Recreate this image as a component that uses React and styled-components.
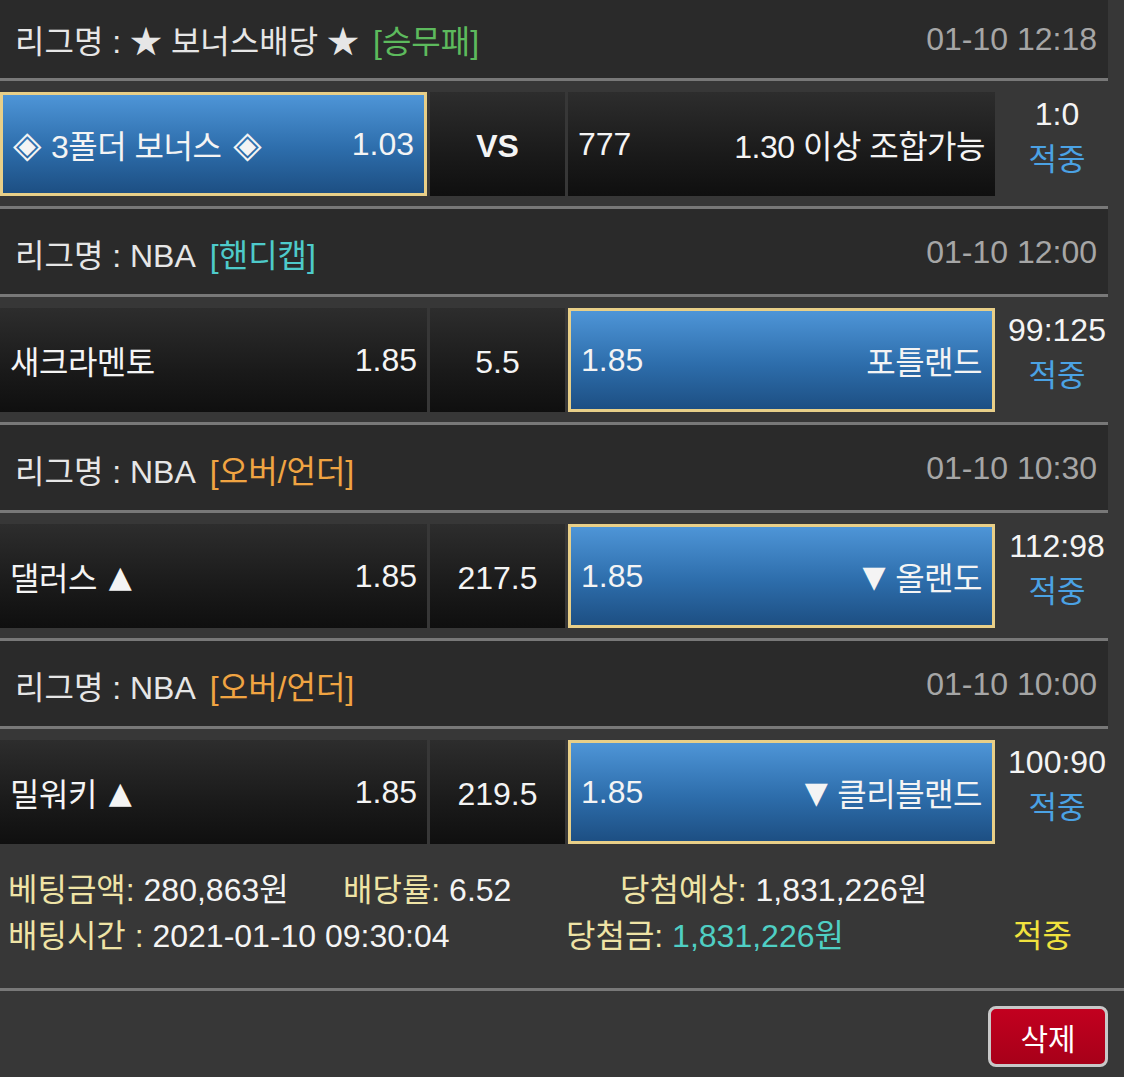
import styled, { createGlobalStyle } from "styled-components";

const GlobalStyle = createGlobalStyle`
    body {
        margin: 0;
        background-color: #373737;
        font-family: "Liberation Sans", "Noto Sans CJK KR", sans-serif;
        color: #f2f2f2;
    }
`;

const matches = [
    {
        league: "★ 보너스배당 ★",
        tag: "[승무패]",
        tagColor: "#5dba5d",
        date: "01-10 12:18",
        home: "3폴더 보너스",
        homeBefore: "◈",
        homeAfter: "◈",
        homeOdds: "1.03",
        mid: "VS",
        awayOdds: "777",
        away: "1.30 이상 조합가능",
        pick: "home",
        score: "1:0",
    },
    {
        league: "NBA",
        tag: "[핸디캡]",
        tagColor: "#4ecaca",
        date: "01-10 12:00",
        home: "새크라멘토",
        homeOdds: "1.85",
        mid: "5.5",
        awayOdds: "1.85",
        away: "포틀랜드",
        pick: "away",
        score: "99:125",
    },
    {
        league: "NBA",
        tag: "[오버/언더]",
        tagColor: "#f0a442",
        date: "01-10 10:30",
        home: "댈러스",
        homeAfter: "▲",
        homeOdds: "1.85",
        mid: "217.5",
        awayOdds: "1.85",
        away: "올랜도",
        awayBefore: "▼",
        pick: "away",
        score: "112:98",
    },
    {
        league: "NBA",
        tag: "[오버/언더]",
        tagColor: "#f0a442",
        date: "01-10 10:00",
        home: "밀워키",
        homeAfter: "▲",
        homeOdds: "1.85",
        mid: "219.5",
        awayOdds: "1.85",
        away: "클리블랜드",
        awayBefore: "▼",
        pick: "away",
        score: "100:90",
    },
];

const App = () => {
    return (
        <Page>
            <GlobalStyle />
            <Board>
                {matches.map((m, i) => (
                    <div key={i}>
                        <Header $first={i === 0}>
                            <League>
                                리그명 : {m.league}
                                <Tag $color={m.tagColor}>{m.tag}</Tag>
                            </League>
                            <DateText>{m.date}</DateText>
                        </Header>
                        <MatchRow $last={i === matches.length - 1}>
                            <Cell $picked={m.pick === "home"}>
                                <Name>
                                    {m.homeBefore && <Glyph $side="right" $big={m.homeBefore === "◈"}>{m.homeBefore}</Glyph>}
                                    {m.home}
                                    {m.homeAfter && <Glyph $side="left" $big={m.homeAfter === "◈"}>{m.homeAfter}</Glyph>}
                                </Name>
                                <span>{m.homeOdds}</span>
                            </Cell>
                            <MidCell $bold={m.mid === "VS"}>{m.mid}</MidCell>
                            <Cell $picked={m.pick === "away"}>
                                <span>{m.awayOdds}</span>
                                <Name>
                                    {m.awayBefore && <Glyph $side="right">{m.awayBefore}</Glyph>}
                                    {m.away}
                                </Name>
                            </Cell>
                            <Score>
                                <div>{m.score}</div>
                                <Hit>적중</Hit>
                            </Score>
                        </MatchRow>
                    </div>
                ))}
            </Board>

            <Summary>
                <SummaryLine $cols="335px 277px 1fr">
                    <span><Label>베팅금액:</Label> 280,863원</span>
                    <span><Label>배당률:</Label> 6.52</span>
                    <span><Label>당첨예상:</Label> 1,831,226원</span>
                </SummaryLine>
                <SummaryLine $cols="558px 447px 1fr">
                    <span><Label>배팅시간 :</Label> 2021-01-10 09:30:04</span>
                    <span><Label>당첨금:</Label> <Win>1,831,226원</Win></span>
                    <Result>적중</Result>
                </SummaryLine>
            </Summary>

            <Actions>
                <DeleteButton>삭제</DeleteButton>
            </Actions>
        </Page>
    );
};

export default App;

const Page = styled.div`
    width: 1124px;
    min-height: 1077px;
    background-color: #373737;
    font-size: 32px;
`;

const Board = styled.div`
    width: 1108px;
`;

const Header = styled.div`
    height: ${props => props.$first ? "78px" : "83px"};
    padding: ${props => props.$first ? "0" : "2px"} 11px 0 15px;
    display: flex;
    align-items: center;
    justify-content: space-between;
    background-color: #2a2a2a;
    border-bottom: 3px solid #787878;
`;

const League = styled.div`
    color: #e6e6e6;
    white-space: nowrap;
`;

const Tag = styled.span`
    margin-left: 14px;
    color: ${props => props.$color};
`;

const DateText = styled.div`
    color: #a6a6a6;
`;

const MatchRow = styled.div`
    display: grid;
    grid-template-columns: 427px 135px 427px 1fr;
    column-gap: 3px;
    height: 104px;
    padding: 11px 0 10px;
    border-bottom: ${props => props.$last ? "none" : "3px solid #787878"};
`;

const Cell = styled.div`
    display: flex;
    align-items: center;
    justify-content: space-between;
    padding: 0 10px;
    box-sizing: border-box;
    white-space: nowrap;
    color: #f4f4f4;
    border: ${props => props.$picked ? "3px solid #e8cf88" : "none"};
    background: ${props => props.$picked
        ? "linear-gradient(180deg, #4e95d7 0%, #2d6dab 55%, #1d4f83 100%)"
        : "linear-gradient(180deg, #2d2d2d 0%, #1a1a1a 60%, #0f0f0f 100%)"};
`;

const Name = styled.span`
    display: flex;
    align-items: center;
    letter-spacing: -0.5px;
`;

const Glyph = styled.span`
    font-family: "DejaVu Sans", sans-serif;
    font-size: ${props => props.$big ? "37px" : "30px"};
    margin-left: ${props => props.$side === "left" ? "12px" : "0"};
    margin-right: ${props => props.$side === "right" ? "10px" : "0"};
`;

const MidCell = styled.div`
    display: flex;
    align-items: center;
    justify-content: center;
    padding-top: 4px;
    box-sizing: border-box;
    font-weight: ${props => props.$bold ? 700 : 400};
    color: #f4f4f4;
    background: linear-gradient(180deg, #2d2d2d 0%, #1a1a1a 60%, #0f0f0f 100%);
`;

const Score = styled.div`
    display: flex;
    flex-direction: column;
    align-items: center;
    padding-left: 8px;
    line-height: 45px;
    color: #f4f4f4;
    white-space: nowrap;
`;

const Hit = styled.div`
    color: #4ba2e4;
    font-size: 31px;
`;

const Summary = styled.div`
    padding: 13px 0 29px 8px;
    border-bottom: 3px solid #787878;
    color: #f4f4f4;
`;

const SummaryLine = styled.div`
    display: grid;
    grid-template-columns: ${props => props.$cols};
    line-height: 46px;
    white-space: nowrap;
`;

const Label = styled.span`
    color: #efe4a6;
`;

const Win = styled.span`
    color: #4fcfc4;
`;

const Result = styled.span`
    color: #f1e23e;
`;

const Actions = styled.div`
    display: flex;
    justify-content: flex-end;
    padding: 15px 16px 0 0;
`;

const DeleteButton = styled.button`
    width: 120px;
    height: 61px;
    border: 3px solid #c8c8c8;
    border-radius: 8px;
    background: linear-gradient(180deg, #c2001f 0%, #a70019 100%);
    color: #ffffff;
    font-family: "Liberation Sans", "Noto Sans CJK KR", sans-serif;
    font-size: 30px;
    cursor: pointer;
`;
